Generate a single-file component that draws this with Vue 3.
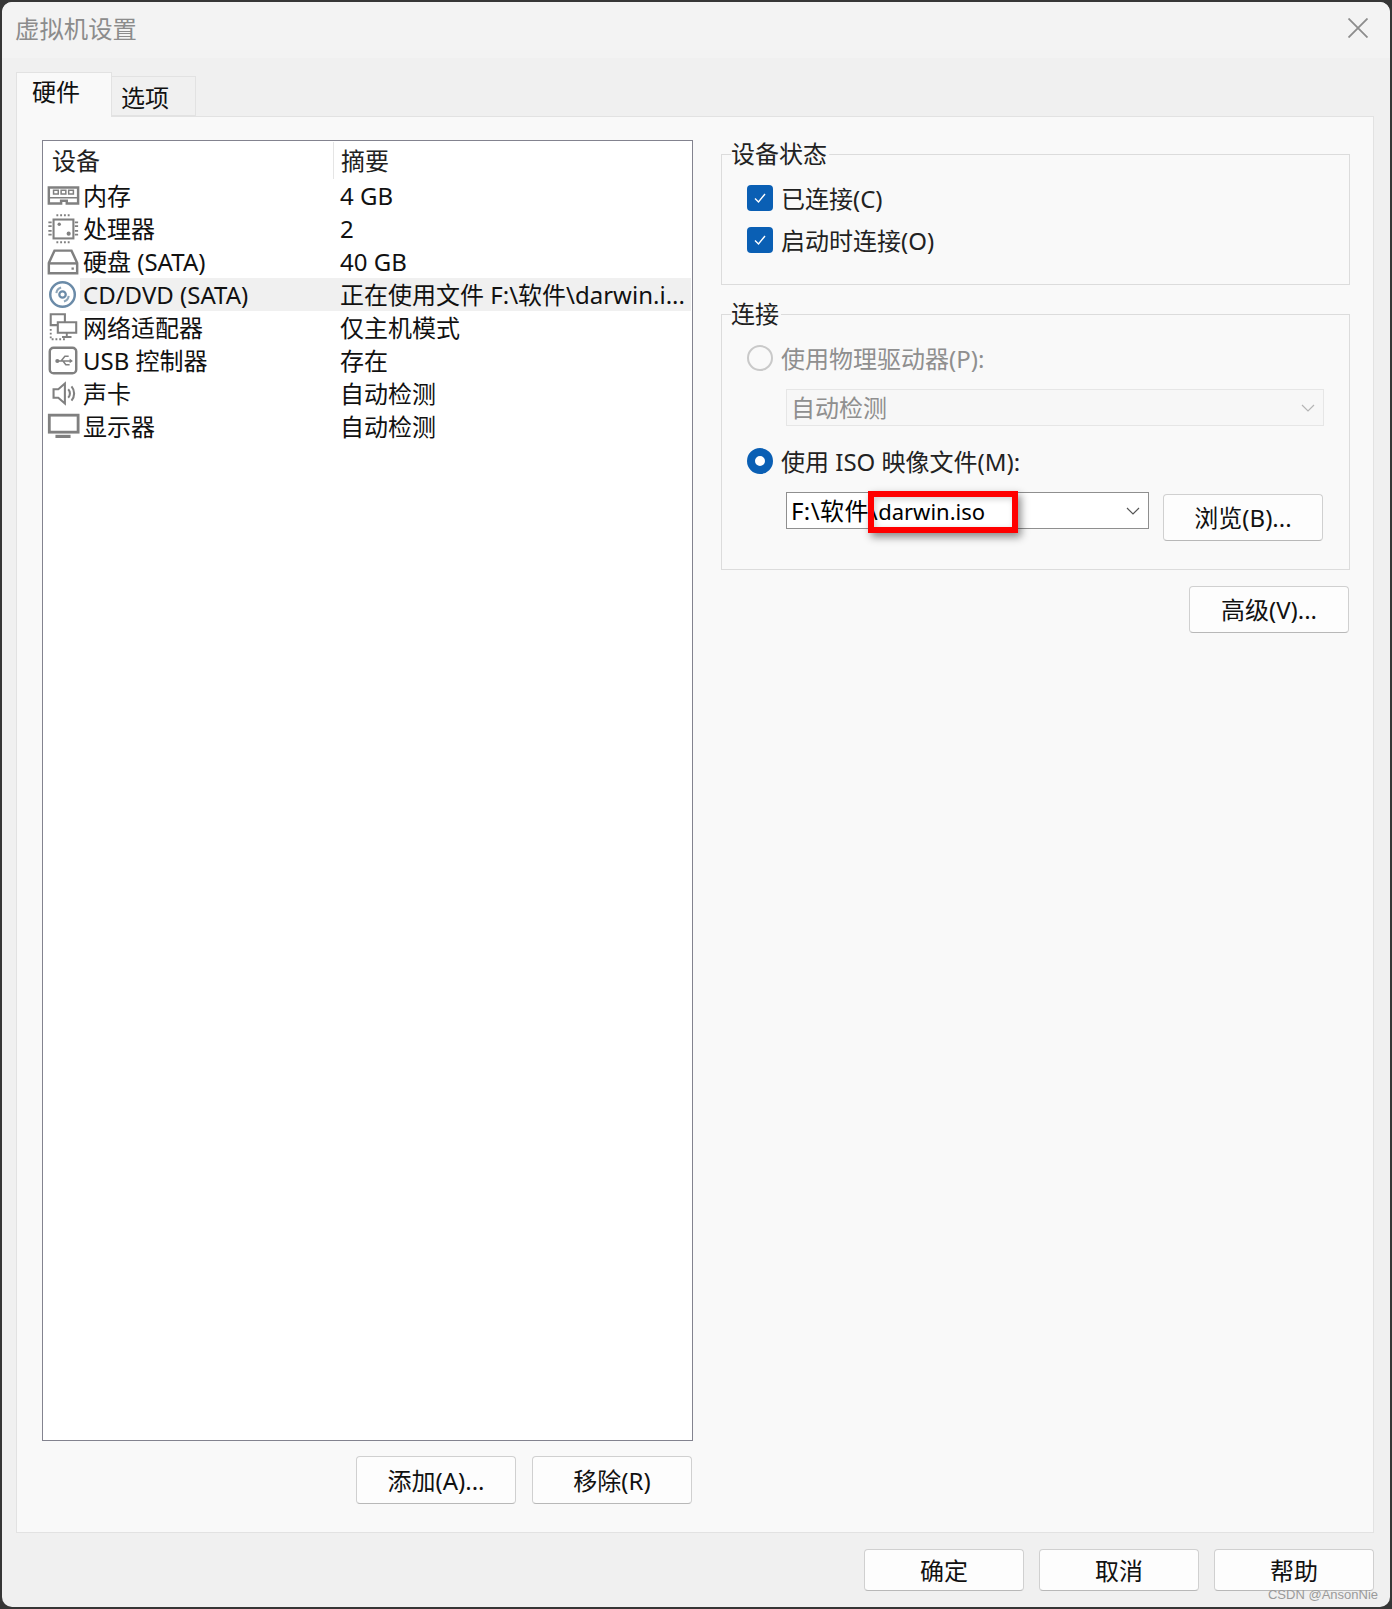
<script setup>
const rows = [
  { icon: 'ram', name: '内存', value: '4 GB' },
  { icon: 'cpu', name: '处理器', value: '2' },
  { icon: 'hdd', name: '硬盘 (SATA)', value: '40 GB' },
  { icon: 'cd', name: 'CD/DVD (SATA)', value: '正在使用文件 F:\\软件\\darwin.i...', active: true },
  { icon: 'net', name: '网络适配器', value: '仅主机模式' },
  { icon: 'usb', name: 'USB 控制器', value: '存在' },
  { icon: 'snd', name: '声卡', value: '自动检测' },
  { icon: 'mon', name: '显示器', value: '自动检测' }
]
</script>

<template>
  <div class="window">
    <header class="titlebar">
      <span class="title">虚拟机设置</span>
      <svg class="close" width="20" height="20" viewBox="0 0 20 20"><path d="M0.5 0.5L19.5 19.5M19.5 0.5L0.5 19.5" stroke="#8c8c8c" stroke-width="1.8" fill="none" /></svg>
    </header>
    <nav class="tabs">
      <span class="tab on">硬件</span>
      <span class="tab">选项</span>
    </nav>
    <main class="panel">
      <section class="left">
        <div class="list">
          <div class="head">
            <span class="hname">设备</span>
            <span class="hval">摘要</span>
          </div>
          <div v-for="r in rows" :key="r.name" class="row" :class="{ active: r.active }">
            <span class="ico">
              <svg width="36" height="33" viewBox="0 0 36 33" fill="none" stroke="#808080" stroke-width="2.6">
                <template v-if="r.icon === 'ram'">
                  <path d="M3 8H34V25H22V22H16V25H3Z" />
                  <path d="M3 19H34" stroke-width="1.6" />
                  <path d="M8 11h5v4H8zM16 11h5v4h-5zM24 11h5v4h-5z" stroke-width="1.6" />
                </template>
                <template v-else-if="r.icon === 'cpu'">
                  <rect x="8" y="7" width="21" height="20" stroke-width="2.2" />
                  <path d="M11 2.5h2M15 2.5h2M19 2.5h2M23 2.5h2M11 31h2M15 31h2M19 31h2M23 31h2M2.5 10h3.5M2.5 14h3.5M2.5 19h3.5M2.5 23h3.5M30.5 10h3.5M30.5 14h3.5M30.5 19h3.5M30.5 23h3.5" stroke-width="2" />
                  <circle cx="14" cy="12" r="1.8" fill="#808080" stroke="none" />
                  <circle cx="24" cy="22" r="2.2" fill="#808080" stroke="none" />
                </template>
                <template v-else-if="r.icon === 'hdd'">
                  <path d="M9 5H27L33 18V29H3V18Z" />
                  <path d="M3 18.5H33" />
                  <path d="M27 24h2.5" stroke-width="2.4" />
                </template>
                <template v-else-if="r.icon === 'cd'">
                  <circle cx="17.5" cy="16.5" r="13" stroke="#6b8ba8" stroke-width="2.6" />
                  <circle cx="17.5" cy="16.5" r="3.4" stroke="#6b8ba8" stroke-width="2.4" />
                  <path d="M11 15a7 7 0 0 1 5-6M24 18a7 7 0 0 1-5 6" stroke="#8ea6ba" stroke-width="2.2" />
                </template>
                <template v-else-if="r.icon === 'net'">
                  <path d="M5 2.5H20V14H5Z" stroke-width="2.2" />
                  <path d="M12.5 11H32V22H12.5Z" fill="#fff" stroke-width="2.2" />
                  <path d="M22 22V26M17 26.5H27" stroke-width="2" />
                  <path d="M5 18V29H22" stroke-dasharray="2 2" stroke-width="2" />
                </template>
                <template v-else-if="r.icon === 'usb'">
                  <rect x="4" y="3" width="28" height="27" rx="4" />
                  <path d="M12 17H27M16 17L20 12H24M18 17L21 21H25" stroke-width="1.6" />
                  <circle cx="12" cy="17" r="2.2" fill="#808080" stroke="none" />
                  <path d="M25 14.5L28.5 17L25 19.5Z" fill="#808080" stroke="none" />
                </template>
                <template v-else-if="r.icon === 'snd'">
                  <path d="M8 12H13L20 6V27L13 21H8Z" stroke-width="2.2" />
                  <path d="M23.5 12a6.5 6.5 0 0 1 0 9M27 9a11.5 11.5 0 0 1 0 15" stroke-width="2.2" />
                </template>
                <template v-else>
                  <rect x="3.5" y="4.5" width="30.5" height="18" stroke-width="3" />
                  <path d="M10 27H26" stroke-width="3.4" />
                </template>
              </svg>
            </span>
            <span class="name">{{ r.name }}</span>
            <span class="val">{{ r.value }}</span>
          </div>
        </div>
        <div class="actions">
          <button class="btn">添加(A)...</button>
          <button class="btn">移除(R)</button>
        </div>
      </section>
      <section class="right">
        <fieldset class="group g1">
          <legend>设备状态</legend>
          <label class="opt"><span class="check"><svg width="14" height="12" viewBox="0 0 14 12"><path d="M2 6.5L5.5 10L12 2" stroke="#fff" stroke-width="1.4" fill="none" /></svg></span>已连接(C)</label>
          <label class="opt"><span class="check"><svg width="14" height="12" viewBox="0 0 14 12"><path d="M2 6.5L5.5 10L12 2" stroke="#fff" stroke-width="1.4" fill="none" /></svg></span>启动时连接(O)</label>
        </fieldset>
        <fieldset class="group g2">
          <legend>连接</legend>
          <label class="opt off"><span class="radio"></span>使用物理驱动器(P):</label>
          <div class="combo disabled">
            <span>自动检测</span>
            <svg width="14" height="8" viewBox="0 0 14 8"><path d="M1 1L7 7L13 1" stroke="#b5b5b5" stroke-width="1.2" fill="none" /></svg>
          </div>
          <label class="opt iso"><span class="radio sel"></span>使用 ISO 映像文件(M):</label>
          <div class="file-row">
            <div class="combo file">
              <span><span class="path">F:\软件\</span><span class="iso-name">darwin.iso</span></span>
              <svg width="14" height="8" viewBox="0 0 14 8"><path d="M1 1L7 7L13 1" stroke="#555" stroke-width="1.2" fill="none" /></svg>
              <i class="mark"></i>
            </div>
            <button class="btn browse">浏览(B)...</button>
          </div>
        </fieldset>
        <div class="adv"><button class="btn">高级(V)...</button></div>
      </section>
    </main>
    <footer class="footer">
      <button class="btn">确定</button>
      <button class="btn">取消</button>
      <button class="btn">帮助</button>
    </footer>
  </div>
  <span class="wm">CSDN @AnsonNie</span>
</template>

<style>
html, body { margin: 0; background: #363636; }
</style>

<style scoped>
.window {
  position: relative;
  box-sizing: border-box;
  width: 1388px;
  height: 1605px;
  margin: 2px 2px 0;
  background: #f0f0f0;
  border-radius: 10px;
  overflow: hidden;
  font: 24px/33px "Noto Sans", "Noto Sans CJK SC", sans-serif;
  color: #111;
}
.titlebar {
  height: 56px;
  background: #f3f3f3;
  display: flex;
  align-items: center;
  justify-content: space-between;
  padding: 0 22px 4px 13px;
  box-sizing: border-box;
}
.title { color: #8c8c8c; font-size: 24.4px; }
.tabs {
  height: 58px;
  padding-left: 14px;
  display: flex;
  align-items: flex-end;
}
.tab {
  box-sizing: border-box;
  width: 84px;
  height: 40px;
  background: #f0f0f0;
  border: 1px solid #e2e2e2;
  border-left: 0;
  line-height: 42px;
  padding-left: 9px;
}
.tab.on {
  width: 96px;
  height: 45px;
  background: #f9f9f9;
  border: 1px solid #e2e2e2;
  border-bottom: 0;
  line-height: 38px;
  margin-bottom: -1px;
  position: relative;
  z-index: 1;
  padding-left: 15px;
}
.panel {
  box-sizing: border-box;
  margin: 0 16px 0 14px;
  height: 1417px;
  background: #f9f9f9;
  border: 1px solid #e2e2e2;
  padding: 23px 24px 0 25px;
  display: flex;
  gap: 28px;
}
.left { width: 651px; flex: none; }
.list {
  box-sizing: border-box;
  height: 1301px;
  background: #fff;
  border: 1px solid #83838f;
}
.head {
  height: 38px;
  display: flex;
  line-height: 40px;
  color: #222;
}
.hname { width: 281px; padding-left: 9px; flex: none; }
.hval {
  border-left: 1px solid #e5e5e5;
  padding-left: 7px;
  height: 37px;
  margin-top: 1px;
  line-height: 38px;
}
.row {
  display: flex;
  height: 33px;
  align-items: center;
  margin-right: 1px;
  white-space: nowrap;
}
.ico {
  width: 37px;
  flex: none;
  height: 33px;
  display: flex;
  align-items: center;
  padding-left: 3px;
  box-sizing: border-box;
  background: #fff;
  overflow: visible;
}
.name { width: 259px; flex: none; padding-left: 3px; box-sizing: border-box; }
.val { flex: 1; padding-left: 1px; }
.active .name, .active .val { background: #f0f0f0; height: 33px; }
.actions {
  display: flex;
  justify-content: flex-end;
  gap: 16px;
  margin-top: 15px;
  padding-right: 1px;
}
.actions .btn { height: 48px; }
.btn {
  box-sizing: border-box;
  width: 160px;
  height: 47px;
  padding: 0;
  background: #fdfdfd;
  border: 1px solid #d0d0d0;
  border-bottom-color: #b8b8b8;
  border-radius: 4px;
  font: inherit;
  color: #111;
}
.right { width: 629px; flex: none; margin-right: -1px; }
.group {
  margin: 0;
  border: 1px solid #dcdcdc;
  min-width: 0;
  box-sizing: border-box;
}
.group legend {
  padding: 0 2px 0 0;
  margin-left: -16px;
  line-height: 30px;
  height: 30px;
  background: #f9f9f9;
  color: #222;
}
.g1 { height: 146px; margin-top: -1px; padding: 8px 0 0 25px; }
.g2 { height: 271px; margin-top: 14px; padding: 6px 0 0 25px; }
.opt { display: flex; align-items: center; gap: 8px; height: 42px; color: #222; }
.check {
  width: 26px;
  height: 26px;
  background: #0a5fb4;
  border-radius: 4px;
  display: flex;
  align-items: center;
  justify-content: center;
  flex: none;
}
.radio {
  box-sizing: border-box;
  width: 26px;
  height: 26px;
  border: 2px solid #c9c9c9;
  border-radius: 50%;
  flex: none;
}
.radio.sel { border: 8px solid #0a5fb4; background: #fff; }
.off { color: #8f8f8f; height: 46px; margin-bottom: 8px; }
.combo {
  box-sizing: border-box;
  margin-left: 39px;
  height: 37px;
  display: flex;
  align-items: center;
  justify-content: space-between;
  padding: 0 8px 0 4px;
  position: relative;
}
.combo.disabled { width: 538px; background: #f7f7f7; border: 1px solid #e6e6e6; color: #8f8f8f; }
.iso { margin-top: 15px; height: 40px; }
.file-row { display: flex; margin-top: 11px; align-items: flex-start; }
.combo.file { width: 363px; background: #fff; border: 1px solid #8f8f8f; color: #000; flex: none; }
.path { letter-spacing: 0.4px; }
.iso-name { font-size: 22px; }
.mark {
  position: absolute;
  left: 81px;
  top: -2px;
  width: 150px;
  height: 42px;
  box-sizing: border-box;
  border: 6px solid #f00;
  box-shadow: 3px 4px 8px rgba(0, 0, 0, 0.45), inset 2px 2px 6px rgba(0, 0, 0, 0.18);
}
.browse { margin: 2px 0 0 14px; }
.adv { display: flex; justify-content: flex-end; margin-top: 16px; padding-right: 1px; }
.footer {
  display: flex;
  justify-content: flex-end;
  gap: 15px;
  padding: 16px 16px 0 0;
}
.footer .btn { height: 42px; }
.wm {
  position: absolute;
  right: 14px;
  top: 1587px;
  font: 13px/16px "Liberation Sans", sans-serif;
  color: #9a9a9a;
}
</style>
